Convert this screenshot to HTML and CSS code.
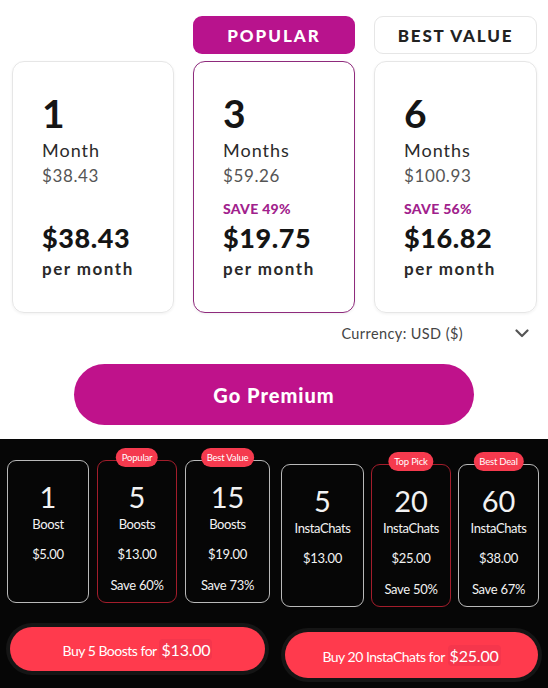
FILE: index.html
```html
<!DOCTYPE html>
<html>
<head>
<meta charset="utf-8">
<link rel="stylesheet" href="styles.css">
</head>
<body>
<section class="premium">
  <div class="badges">
    <div class="badge-slot"></div>
    <div class="badge badge-popular">POPULAR</div>
    <div class="badge badge-best">BEST VALUE</div>
  </div>
  <div class="plans">
    <div class="plan">
      <div class="num">1</div>
      <div class="unit">Month</div>
      <div class="total">$38.43</div>
      <div class="save"></div>
      <div class="price">$38.43</div>
      <div class="per">per month</div>
    </div>
    <div class="plan plan-selected">
      <div class="num">3</div>
      <div class="unit">Months</div>
      <div class="total">$59.26</div>
      <div class="save">SAVE 49%</div>
      <div class="price">$19.75</div>
      <div class="per">per month</div>
    </div>
    <div class="plan">
      <div class="num">6</div>
      <div class="unit">Months</div>
      <div class="total">$100.93</div>
      <div class="save">SAVE 56%</div>
      <div class="price">$16.82</div>
      <div class="per">per month</div>
    </div>
  </div>
  <div class="currency">
    <span class="currency-label">Currency: USD ($)</span>
    <svg class="chevron" width="14" height="9" viewBox="0 0 14 9"><path d="M1.5 1.5 L7 7 L12.5 1.5" fill="none" stroke="#555" stroke-width="2.2" stroke-linecap="round" stroke-linejoin="round"/></svg>
  </div>
  <button class="go-premium">Go Premium</button>
</section>
<section class="dark">
  <div class="panel panel-left">
    <div class="packs">
      <div class="pack">
        <div class="pack-num">1</div>
        <div class="pack-unit">Boost</div>
        <div class="pack-price">$5.00</div>
      </div>
      <div class="pack pack-hl">
        <span class="tag">Popular</span>
        <div class="pack-num">5</div>
        <div class="pack-unit">Boosts</div>
        <div class="pack-price">$13.00</div>
        <div class="pack-save">Save 60%</div>
      </div>
      <div class="pack">
        <span class="tag">Best Value</span>
        <div class="pack-num">15</div>
        <div class="pack-unit">Boosts</div>
        <div class="pack-price">$19.00</div>
        <div class="pack-save">Save 73%</div>
      </div>
    </div>
    <button class="buy">Buy 5 Boosts for <span class="buy-amt">$13.00</span></button>
  </div>
  <div class="panel panel-right">
    <div class="packs">
      <div class="pack">
        <div class="pack-num">5</div>
        <div class="pack-unit">InstaChats</div>
        <div class="pack-price">$13.00</div>
      </div>
      <div class="pack pack-hl">
        <span class="tag">Top Pick</span>
        <div class="pack-num">20</div>
        <div class="pack-unit">InstaChats</div>
        <div class="pack-price">$25.00</div>
        <div class="pack-save">Save 50%</div>
      </div>
      <div class="pack">
        <span class="tag">Best Deal</span>
        <div class="pack-num">60</div>
        <div class="pack-unit">InstaChats</div>
        <div class="pack-price">$38.00</div>
        <div class="pack-save">Save 67%</div>
      </div>
    </div>
    <button class="buy">Buy 20 InstaChats for <span class="buy-amt">$25.00</span></button>
  </div>
</section>
</body>
</html>
```
FILE: styles.css
```css
* { box-sizing: border-box; }
html, body { margin: 0; padding: 0; }
body {
  width: 548px;
  height: 688px;
  overflow: hidden;
  font-family: "Lato", "Open Sans", sans-serif;
  background: #fff;
}

.premium {
  height: 439px;
  background: #fff;
  padding: 16px 0 0 12px;
}

.badges, .plans {
  display: grid;
  grid-template-columns: 162px 162px 163px;
  column-gap: 19px;
}

.badge {
  height: 38px;
  border-radius: 9px;
  display: flex;
  align-items: center;
  justify-content: center;
  font-weight: 900;
  font-size: 17px;
  letter-spacing: 2px;
}
.badge-popular {
  background: #b8138d;
  color: #fff;
}
.badge-best {
  background: #fff;
  color: #222;
  border: 1.5px solid #e6e6e6;
  letter-spacing: 1.8px;
}

.plans { margin-top: 7px; }

.plan {
  height: 252px;
  border: 1.5px solid #e6e6e6;
  border-radius: 12px;
  padding: 28px 0 0 29px;
  color: #151515;
  box-shadow: 0 1px 3px rgba(0,0,0,0.06);
}
.plan-selected {
  border: 1.5px solid #8e2a7c;
}
.num {
  font-size: 39px;
  font-weight: 700;
  line-height: 46px;
}
.unit {
  font-size: 18px;
  line-height: 22px;
  margin-top: 3px;
  color: #2a2a2a;
  letter-spacing: 1px;
}
.total {
  font-size: 17px;
  line-height: 22px;
  margin-top: 4px;
  color: #555;
  letter-spacing: 0.6px;
}
.save {
  height: 16px;
  margin-top: 14px;
  font-size: 14px;
  font-weight: 900;
  color: #a1218c;
  line-height: 16px;
  letter-spacing: 0.3px;
}
.price {
  font-size: 27px;
  font-weight: 900;
  line-height: 30px;
  margin-top: 6px;
  letter-spacing: 0.6px;
}
.per {
  font-size: 17px;
  font-weight: 700;
  line-height: 22px;
  margin-top: 5px;
  color: #2a2a2a;
  letter-spacing: 1.5px;
}

.currency {
  display: flex;
  justify-content: flex-end;
  align-items: center;
  gap: 52px;
  padding-right: 19px;
  margin-top: 10px;
  height: 20px;
}
.currency-label {
  font-size: 14.5px;
  color: #444;
  letter-spacing: 0.4px;
}

.go-premium {
  display: block;
  margin: 21px 0 0 62px;
  width: 400px;
  height: 61px;
  border: none;
  border-radius: 31px;
  background: #bf128b;
  color: #fff;
  font-family: "Lato", sans-serif;
  font-weight: 900;
  font-size: 20px;
  letter-spacing: 1px;
}

.dark {
  height: 249px;
  background: #060606;
  display: grid;
  grid-template-columns: 275px 273px;
  font-family: "Lato", sans-serif;
}

.panel { position: relative; }
.panel-left { padding: 21px 0 0 7px; }
.panel-right { padding: 25px 0 0 6px; }

.packs {
  display: grid;
  grid-template-columns: 82px 80px 85px;
  column-gap: 8px;
}
.panel-right .packs {
  grid-template-columns: 83px 80px 81px;
  column-gap: 7px;
}

.pack {
  position: relative;
  height: 143px;
  border: 1.3px solid #b9b9b9;
  border-radius: 9px;
  color: #f2f2f2;
  text-align: center;
  padding-top: 19px;
}
.pack-hl { border-color: #a31d2b; }

.tag {
  position: absolute;
  top: -13px;
  left: 50%;
  transform: translateX(-50%);
  background: #f53a4e;
  color: #fff;
  font-size: 9.5px;
  line-height: 19px;
  height: 19px;
  padding: 0 6px;
  border-radius: 10px;
  white-space: nowrap;
  letter-spacing: -0.2px;
}

.pack-num {
  font-size: 29px;
  line-height: 34px;
  font-weight: 400;
}
.pack-unit {
  font-size: 13px;
  line-height: 16px;
  margin-top: 2px;
  letter-spacing: -0.4px;
}
.pack-price {
  font-size: 13px;
  line-height: 16px;
  margin-top: 14px;
  letter-spacing: -0.3px;
}
.pack-save {
  font-size: 13px;
  line-height: 16px;
  margin-top: 15px;
  letter-spacing: -0.3px;
}

.buy {
  display: block;
  margin-top: 24px;
  margin-left: 3px;
  width: 255px;
  height: 44px;
  border: none;
  border-radius: 22px;
  background: #ff3a4d;
  box-shadow: 0 0 0 4px #151515;
  color: #fff;
  font-family: "Lato", sans-serif;
  font-size: 14px;
  letter-spacing: -0.5px;
}
.panel-right .buy {
  margin-top: 25px;
  margin-left: 4px;
  width: 253px;
  height: 46px;
  border-radius: 23px;
}
.buy-amt {
  font-size: 16px;
  letter-spacing: -0.2px;
  background: #f5364c;
  border-radius: 4px;
  padding: 1px 2px;
}
```
